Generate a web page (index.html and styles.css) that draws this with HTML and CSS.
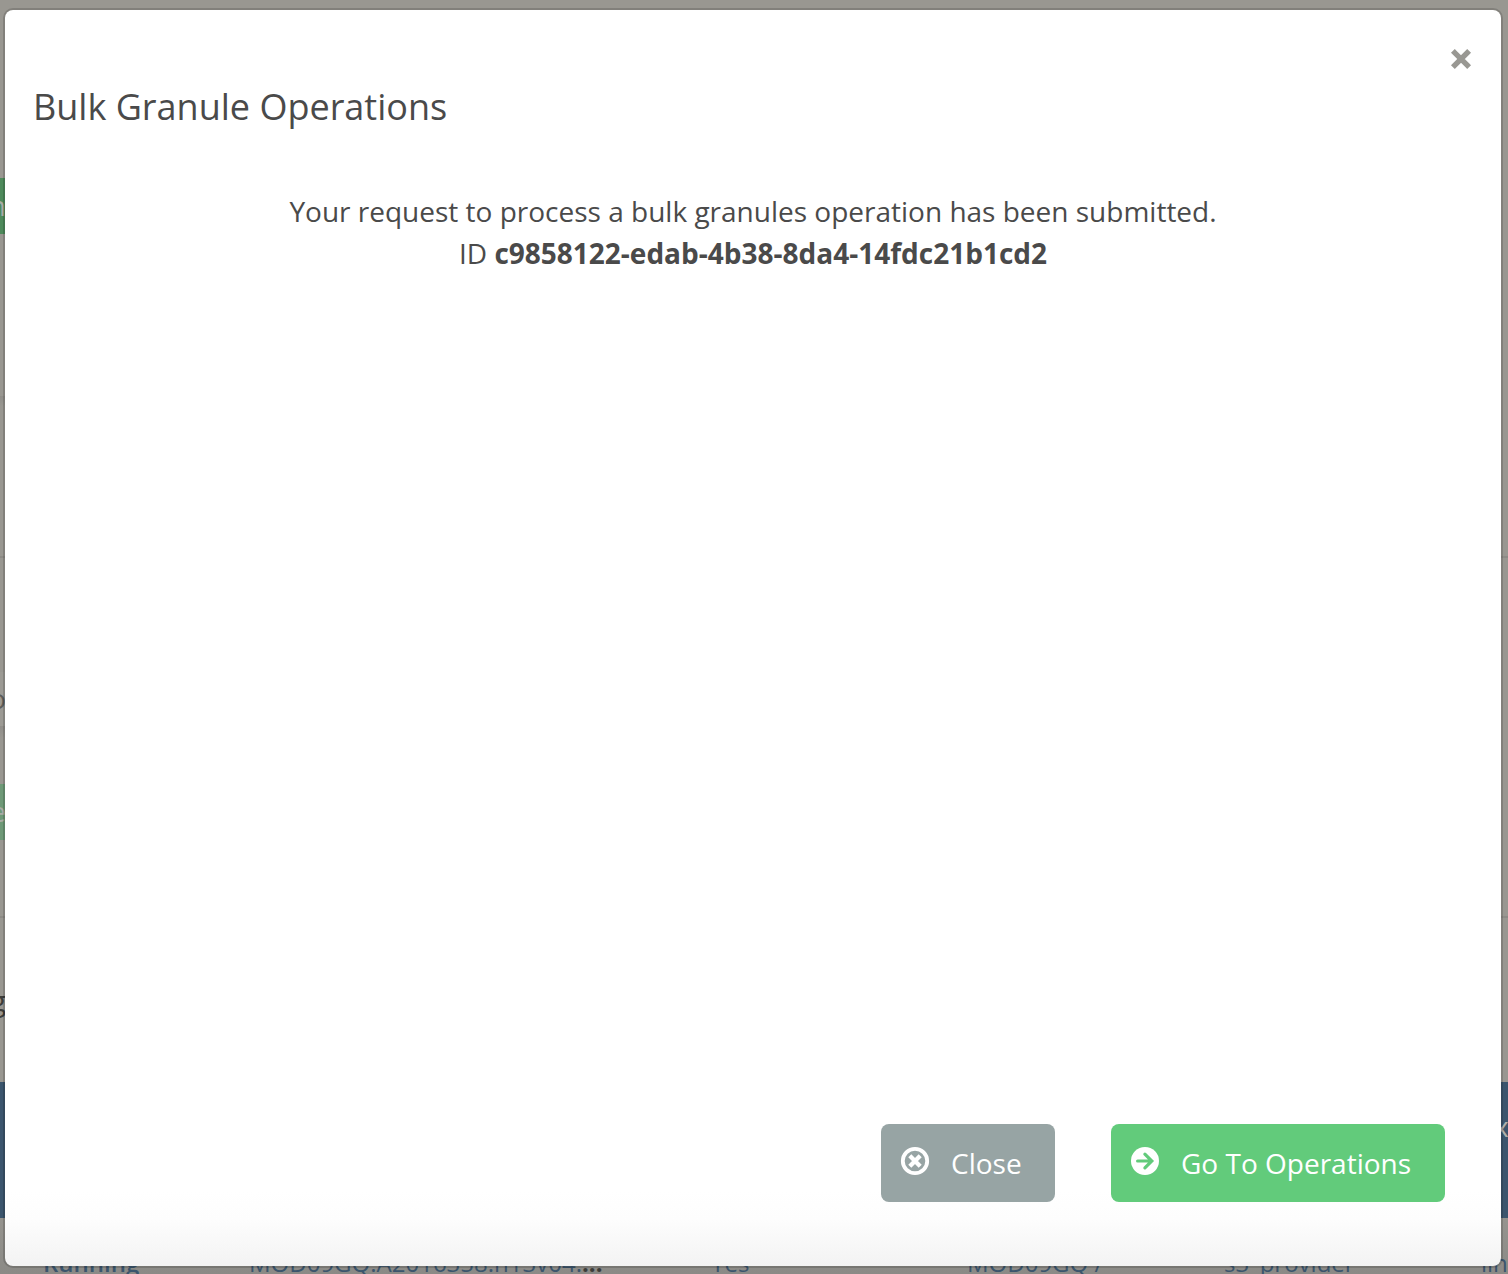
FILE: index.html
```html
<!DOCTYPE html>
<html lang="en">
<head>
<meta charset="utf-8">
<title>Bulk Granule Operations</title>
<link rel="stylesheet" href="styles.css">
</head>
<body>
<main class="page">
  <div class="section section-top"></div>
  <div class="section action action-strong"><span>n</span></div>
  <div class="section section-summary"></div>
  <div class="section section-panel"></div>
  <div class="section section-lined section-filters"></div>
  <div class="section tabs"><span>o</span></div>
  <div class="section section-gap"></div>
  <div class="section action"><span>e</span></div>
  <div class="section section-spacer"></div>
  <div class="section section-lined heading"><span>g</span></div>
  <div class="table-head"><span>x</span></div>
  <div class="table-row">
    <strong>Running</strong>
    <span>MOD09GQ.A2016358.h13v04.<b>...</b></span>
    <span>Yes</span>
    <span>MOD09GQ / </span>
    <span>s3_provider</span>
    <span>link</span>
  </div>
</main>
<section class="modal" role="dialog" aria-labelledby="modal-title">
  <header class="modal-header">
    <button class="dismiss" aria-label="Dismiss">
      <svg viewBox="0 0 20 20" width="20" height="20"><path d="M3.8 3.8 16.2 16.2M16.2 3.8 3.8 16.2" stroke="#999893" stroke-width="5.4" stroke-linecap="square" fill="none"/></svg>
    </button>
    <h1 class="modal-title" id="modal-title">Bulk Granule Operations</h1>
  </header>
  <div class="modal-body">
    <p>Your request to process a bulk granules operation has been submitted.</p>
    <p>ID <strong>c9858122-edab-4b38-8da4-14fdc21b1cd2</strong></p>
  </div>
  <footer class="modal-footer">
    <button class="button button-close">
      <svg viewBox="0 0 28 28" width="28" height="28"><circle cx="14" cy="14" r="12.2" fill="none" stroke="#fff" stroke-width="3.8"/><path d="M8.8 8.8 19.2 19.2M19.2 8.8 8.8 19.2" stroke="#fff" stroke-width="4.3" fill="none"/></svg>
      <span>Close</span>
    </button>
    <button class="button button-go">
      <svg viewBox="0 0 28 28" width="28" height="28"><circle cx="14" cy="14" r="14" fill="#fff"/><path d="M6.6 14H20.5M13.9 7.1 20.8 14 13.9 20.9" stroke="#62cb7b" stroke-width="3.2" stroke-linecap="round" fill="none"/></svg>
      <span>Go To Operations</span>
    </button>
  </footer>
</section>
</body>
</html>
```
FILE: styles.css
```css
* { box-sizing: border-box; }
body {
  margin: 0;
  height: 1274px;
  overflow: hidden;
  font-family: "Open Sans", sans-serif;
  font-size: 28px;
  color: #4a4a4a;
}
p, h1 { margin: 0; font-weight: 400; }
button { border: 0; padding: 0; font: inherit; }
.page {
  height: 1274px;
  overflow: hidden;
  background: linear-gradient(#999791 0, #999791 1200px, #8b8a86 1274px);
}
.section { display: flex; align-items: center; }
.section span {
  width: 6px;
  display: flex;
  justify-content: flex-end;
  line-height: 1;
  padding-bottom: 3px;
}
.section-top { height: 178px; }
.action { width: 6px; height: 56px; background: #6e9977; color: #a9aca5; }
.action-strong { background: #4e8a5b; }
.section-summary { height: 162px; }
.section-panel { width: 6px; height: 160px; background: linear-gradient(#908e89, #999791 10px); }
.section-lined { height: 160px; border-top: 2px solid #8d8b86; }
.section-filters { height: 116px; }
.tabs { width: 6px; height: 54px; background: #9c9a94; color: #5d5c58; }
.section-gap { width: 6px; height: 58px; background: linear-gradient(#908e89, #999791 12px); }
.section-spacer { height: 76px; }
.heading { height: 166px; color: #3d3d3a; }
.heading span { padding-bottom: 0; }
.table-head {
  height: 136px;
  background: #3b556d;
  color: #b0b0ab;
  display: flex;
  justify-content: flex-end;
  align-items: center;
}
.table-head span { width: 14px; margin-top: -48px; }
.table-row {
  display: grid;
  grid-template-columns: 206px 462px 256px 257px 257px 1fr;
  padding: 25px 0 0 43px;
  font-size: 24px;
  line-height: 40px;
  color: #3b556d;
  white-space: nowrap;
}
.table-row strong { font-weight: 600; }
.table-row b { color: #3d3d3a; }
.modal {
  position: absolute;
  left: 3px;
  top: 8px;
  width: 1500px;
  height: 1260px;
  display: flex;
  flex-direction: column;
  border: 2px solid rgba(0, 0, 0, .15);
  border-radius: 10px;
  background: linear-gradient(#fff 1180px, #fdfdfd 1210px, #f3f3f3 1256px) padding-box;
}
.modal-header { padding: 39px 30px 0 28px; }
.dismiss { display: block; width: 20px; height: 20px; margin-left: auto; background: none; }
.dismiss svg { display: block; overflow: visible; }
.modal-title { margin-top: 12px; font-size: 36px; line-height: 52px; }
.modal-body { flex: 1; padding-top: 57px; line-height: 42px; text-align: center; }
.modal-footer { display: flex; justify-content: flex-end; gap: 56px; padding: 0 56px 64px; }
.button {
  display: flex;
  align-items: center;
  gap: 22px;
  height: 78px;
  padding-left: 20px;
  border-radius: 8px;
  color: #fff;
}
.button svg { margin-top: -4px; overflow: visible; }
.button span { line-height: 42px; white-space: nowrap; }
.button-close { width: 174px; background: #97a4a4; }
.button-go { width: 334px; background: #62cb7b; }
```
